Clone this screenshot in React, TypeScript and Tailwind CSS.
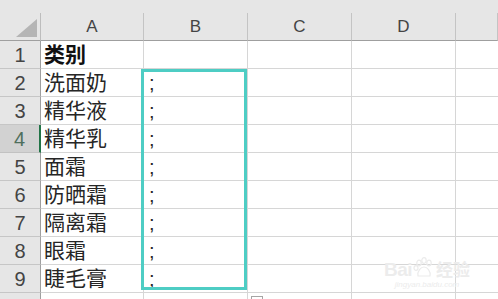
import React from "react";

const font = { fontFamily: '"Liberation Sans", "Noto Sans CJK SC", sans-serif' };

const colLetters = ["A", "B", "C", "D", ""];

const rows: { a: string; b: string; bold?: boolean }[] = [
  { a: "类别", b: "", bold: true },
  { a: "洗面奶", b: ";" },
  { a: "精华液", b: ";" },
  { a: "精华乳", b: ";" },
  { a: "面霜", b: ";" },
  { a: "防晒霜", b: ";" },
  { a: "隔离霜", b: ";" },
  { a: "眼霜", b: ";" },
  { a: "睫毛膏", b: ";" },
];

export default function App() {
  return (
    <div className="relative w-[498px] h-[299px] overflow-hidden bg-white text-[#262626]" style={font}>
      {/* strip above column headers */}
      <div className="h-[13px] bg-[#e6e6e6]" />

      <div className="grid grid-cols-[41px_103px_104px_104px_104px_1fr]">
        {/* header row */}
        <div className="relative h-[28px] bg-[#e6e6e6] border-r border-b border-r-[#bdbdbd] border-b-[#9f9f9f]">
          <svg className="absolute right-[3px] bottom-[3px]" width="21" height="18" viewBox="0 0 21 18">
            <polygon points="21,0 21,18 0,18" fill="#b5b5b5" />
          </svg>
        </div>
        {colLetters.map((c, i) => (
          <div
            key={i}
            className="h-[28px] bg-[#e6e6e6] border-r border-b border-r-[#c4c4c4] border-b-[#9f9f9f] flex items-center justify-center text-[17px] text-[#444] leading-none pb-[1px]"
          >
            {c}
          </div>
        ))}

        {/* body rows */}
        {rows.map((r, i) => {
          const active = i === 3;
          return (
            <React.Fragment key={i}>
              <div
                className={
                  active
                    ? "h-[28px] bg-[#d2d2d2] border-b border-b-[#c2c2c2] border-r-2 border-r-[#217346] flex items-center justify-center text-[20px] text-[#4f6f5d] leading-none"
                    : "h-[28px] bg-[#e6e6e6] border-b border-r border-b-[#c6c6c6] border-r-[#9f9f9f] flex items-center justify-center text-[20px] text-[#444] leading-none"
                }
              >
                {i + 1}
              </div>
              <div
                className={
                  "h-[28px] border-r border-b border-[#d6d6d6] flex items-center pl-[3px] text-[21px] leading-none whitespace-nowrap " +
                  (r.bold ? "font-bold text-[#111]" : "")
                }
              >
                {r.a}
              </div>
              <div className="h-[28px] border-r border-b border-[#d6d6d6] flex items-center pl-[5px] text-[20px] leading-none">
                {r.b}
              </div>
              <div className="h-[28px] border-r border-b border-[#d6d6d6]" />
              <div className="h-[28px] border-r border-b border-[#d6d6d6]" />
              <div className="h-[28px] border-b border-[#d6d6d6]" />
            </React.Fragment>
          );
        })}

        {/* partly visible row 10 */}
        <div className="h-[28px] bg-[#e6e6e6] border-r border-r-[#9f9f9f]" />
        <div className="h-[28px] border-r border-[#d6d6d6]" />
        <div className="h-[28px] border-r border-[#d6d6d6]" />
        <div className="h-[28px] border-r border-[#d6d6d6]" />
        <div className="h-[28px] border-r border-[#d6d6d6]" />
        <div className="h-[28px]" />
      </div>

      {/* selection box B2:B9 */}
      <div className="absolute left-[141px] top-[69px] w-[106px] h-[221px] border-[3px] border-[#4ecdc4]" />

      {/* paste options tag */}
      <div className="absolute left-[251px] top-[296px] w-[12px] h-[10px] border border-[#a5a5a5] bg-white" />

      {/* watermark */}
      <div className="absolute left-[384px] top-[257px] flex flex-col items-center text-[#ececec] leading-none pointer-events-none">
        <div className="flex items-end gap-[1px]">
          <span className="text-[19px] font-bold tracking-[-0.5px]">Bai</span>
          <svg width="22" height="22" viewBox="0 0 22 22" fill="none" stroke="#ebebeb" strokeWidth="1.2">
            <ellipse cx="6" cy="6" rx="2.2" ry="2.8" />
            <ellipse cx="11" cy="3.5" rx="2.2" ry="2.8" />
            <ellipse cx="16" cy="6" rx="2.2" ry="2.8" />
            <ellipse cx="3" cy="11" rx="2" ry="2.4" />
            <path d="M5 19 C4 14 8 10 11 10 C14 10 18 14 17 19 Z" />
          </svg>
          <span className="text-[17px] font-bold">经验</span>
        </div>
        <span className="text-[8px] mt-[2px] italic">jingyan.baidu.com</span>
      </div>
    </div>
  );
}
